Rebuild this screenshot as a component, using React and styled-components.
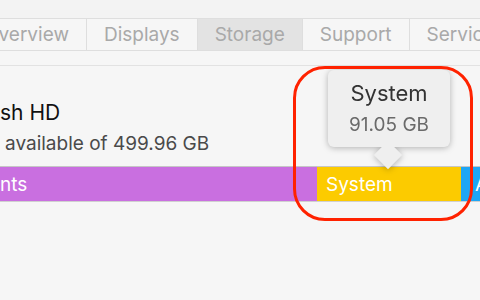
import React from 'react'
import styled, { createGlobalStyle } from 'styled-components';

const GlobalStyle = createGlobalStyle`
  html, body { margin: 0; padding: 0; background: #f6f6f6; }
  body { font-family: Inter, "Open Sans", "Liberation Sans", sans-serif; }
`;

const Window = styled.div`
  position: relative;
  width: 480px;
  height: 300px;
  overflow: hidden;
  background: #f6f6f6;
`;

const TopStrip = styled.div`
  height: 18px;
  background: #f3f3f3;
`;

const TabRow = styled.div`
  display: flex;
  height: 31px;
  margin-left: -33px;
  border-top: 1px solid #dedede;
  border-bottom: 1px solid #dedede;
  background: #f6f6f6;
`;

const Tab = styled.div`
  display: flex;
  align-items: center;
  padding: 0 17px;
  font-size: 19px;
  color: #a9a9a9;
  white-space: nowrap;
  border-right: 1px solid #dedede;
  background: ${(props) => props.selected ? "#e3e3e3" : "transparent"};
`;

const Gap = styled.div`
  height: 14px;
  border-bottom: 1px solid #e2e2e2;
`;

const Content = styled.div`
  padding-top: 35px;
`;

const DiskName = styled.div`
  font-size: 21px;
  color: #111;
  line-height: 24px;
  height: 24px;
`;

const DiskInfo = styled.div`
  margin-top: 9px;
  height: 20px;
  font-size: 19px;
  color: #4a4a4a;
  line-height: 20px;
  padding-left: 5px;
`;

const Bar = styled.div`
  display: flex;
  margin-top: 12px;
  height: 34px;
  border-top: 1px solid #c6c6c6;
  border-bottom: 1px solid #d0d0d0;
`;

const Segment = styled.div`
  display: flex;
  align-items: center;
  flex: ${(props) => props.grow ? 1 : "none"};
  width: ${(props) => props.w ? props.w + "px" : "auto"};
  padding-left: ${(props) => props.pad || 0}px;
  box-sizing: border-box;
  background: ${(props) => props.color};
  color: #fff;
  font-size: 19px;
  white-space: nowrap;
  overflow: hidden;
`;

const Tooltip = styled.div`
  position: absolute;
  left: 328px;
  top: 70px;
  width: 122px;
  filter: drop-shadow(0 1px 3px rgba(0, 0, 0, 0.28));
`;

const Bubble = styled.div`
  position: relative;
  z-index: 1;
  height: 77px;
  border-radius: 6px;
  background: #efefef;
  text-align: center;
`;

const TipTitle = styled.div`
  padding-top: 11px;
  font-size: 22px;
  color: #333;
  line-height: 24px;
`;

const TipValue = styled.div`
  margin-top: 10px;
  font-size: 19px;
  color: #6a6a6a;
  line-height: 20px;
`;

const Arrow = styled.div`
  position: absolute;
  left: 50px;
  top: 75px;
  width: 20px;
  height: 20px;
  background: #efefef;
  transform: rotate(45deg);
`;

const Highlight = styled.div`
  position: absolute;
  left: 293px;
  top: 66px;
  width: 174px;
  height: 149px;
  border: 3px solid #ff2200;
  border-radius: 32px;
`;

const App = () => {
  return (
    <Window>
      <GlobalStyle />
      <TopStrip />
      <TabRow>
        <Tab>Overview</Tab>
        <Tab>Displays</Tab>
        <Tab selected>Storage</Tab>
        <Tab>Support</Tab>
        <Tab>Service</Tab>
      </TabRow>
      <Gap />
      <Content>
        <DiskName>sh HD</DiskName>
        <DiskInfo>available of 499.96 GB</DiskInfo>
        <Bar>
          <Segment w={317} color="#c96fe0">nts</Segment>
          <Segment w={144} pad={9} color="#fccb00">System</Segment>
          <Segment grow pad={14} color="#1ea6f5">Apps</Segment>
        </Bar>
      </Content>
      <Tooltip>
        <Bubble>
          <TipTitle>System</TipTitle>
          <TipValue>91.05 GB</TipValue>
        </Bubble>
        <Arrow />
      </Tooltip>
      <Highlight />
    </Window>
  );
}

export default App
